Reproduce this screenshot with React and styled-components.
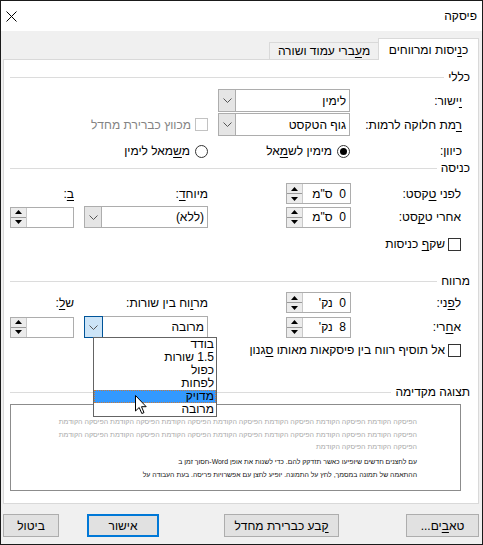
import React from "react";
import styled, { createGlobalStyle, css } from "styled-components";

const Global = createGlobalStyle`
  html, body { margin: 0; padding: 0; background: #fff; }
  body { font-family: "Liberation Sans", "DejaVu Sans", Arial, sans-serif; font-size: 12px; color: #000; }
  * { box-sizing: border-box; }
  u { text-underline-offset: 2px; }
`;

const Window = styled.div`
  width: 483px;
  height: 545px;
  border: 1px solid #1a1a1a;
  display: flex;
  flex-direction: column;
  direction: rtl;
  background: #f0f0f0;
`;

const TitleBar = styled.div`
  height: 30px;
  flex: none;
  background: #fff;
  display: flex;
  align-items: center;
  justify-content: space-between;
  padding: 0 5px 0 4px;
  font-size: 12px;
`;

const CloseBtn = styled.div`
  width: 12px;
  height: 12px;
  display: flex;
  align-items: center;
  justify-content: center;
`;

const Body = styled.div`
  flex: 1;
  display: flex;
  flex-direction: column;
  padding: 7px 3px 7px 2px;
`;

const TabStrip = styled.div`
  height: 22px;
  display: flex;
  align-items: flex-start;
  position: relative;
  z-index: 2;
`;

const Tab = styled.div`
  display: flex;
  align-items: center;
  justify-content: center;
  border: 1px solid #d9d9d9;
  ${(p) =>
    p.$active
      ? css`
          width: 101px;
          height: 22px;
          background: #fff;
          border-bottom: none;
          padding-top: 1px;
        `
      : css`
          width: 110px;
          height: 17px;
          margin-top: 4px;
          margin-right: -1px;
          background: #f0f0f0;
          border-bottom: none;
        `}
`;

const Panel = styled.div`
  height: 445px;
  margin-top: -1px;
  background: #fff;
  border: 1px solid #d9d9d9;
  padding: 10px 8px 0 6px;
  display: flex;
  flex-direction: column;
`;

const SectionHead = styled.div`
  display: flex;
  align-items: center;
  height: 14px;
  margin-top: ${(p) => p.$mt || 0}px;
  white-space: nowrap;
  &::after {
    content: "";
    flex: 1;
    height: 1px;
    background: #dcdcdc;
    margin-right: 4px;
  }
`;

const Row = styled.div`
  display: grid;
  grid-template-columns: ${(p) => p.$cols};
  align-items: center;
  height: ${(p) => p.$h}px;
  margin-top: ${(p) => p.$mt || 0}px;
  padding-right: ${(p) => p.$pr || 0}px;
`;

const FlexRow = styled.div`
  display: flex;
  align-items: center;
  height: ${(p) => p.$h}px;
  margin-top: ${(p) => p.$mt || 0}px;
  padding-right: ${(p) => p.$pr || 0}px;
`;

const Label = styled.div`
  white-space: nowrap;
  color: ${(p) => (p.$disabled ? "#838383" : "#000")};
`;

const ComboWrap = styled.div`
  position: relative;
  height: ${(p) => p.$h}px;
  display: flex;
  direction: ltr;
  border: 1px solid #adadad;
  background: #fff;
`;

const ComboButton = styled.div`
  width: 17px;
  flex: none;
  display: flex;
  align-items: center;
  justify-content: center;
  ${(p) =>
    p.$hot
      ? css`
          background: #cce4f7;
          outline: 1px solid #005499;
        `
      : css`
          background: #e5e5e5;
          border-right: 1px solid #adadad;
        `}
`;

const ComboText = styled.div`
  flex: 1;
  direction: rtl;
  text-align: right;
  padding-right: 3px;
  display: flex;
  align-items: center;
  white-space: nowrap;
`;

const SpinWrap = styled.div`
  height: ${(p) => p.$h}px;
  display: flex;
  direction: ltr;
  border: 1px solid #adadad;
  background: #fff;
`;

const SpinButtons = styled.div`
  width: 16px;
  flex: none;
  display: flex;
  flex-direction: column;
  border-right: 1px solid #c9c9c9;
`;

const SpinHalf = styled.div`
  flex: 1;
  display: flex;
  align-items: center;
  justify-content: center;
  background: #ececec;
  ${(p) => p.$top && css`border-bottom: 1px solid #9a9a9a;`}
`;

const SpinText = styled.div`
  flex: 1;
  direction: rtl;
  text-align: right;
  padding-right: 4px;
  display: flex;
  align-items: center;
  white-space: pre;
`;

const Box = styled.div`
  width: 13px;
  height: 13px;
  flex: none;
  border: 1px solid ${(p) => (p.$disabled ? "#c2c2c2" : "#333")};
  background: #fff;
  margin-left: ${(p) => p.$gap ?? 4}px;
`;

const RadioCircle = styled.div`
  width: 13px;
  height: 13px;
  flex: none;
  border: 1px solid #333;
  border-radius: 50%;
  background: #fff;
  display: flex;
  align-items: center;
  justify-content: center;
  margin-left: 5px;
  &::after {
    content: "";
    width: 7px;
    height: 7px;
    border-radius: 50%;
    background: ${(p) => (p.$checked ? "#000" : "transparent")};
  }
`;

const Option = styled.div`
  display: flex;
  align-items: center;
  white-space: nowrap;
`;

const DropList = styled.div`
  position: absolute;
  left: 8px;
  top: 20px;
  width: 124px;
  height: 80px;
  border: 1px solid #646464;
  background: #fff;
  direction: rtl;
  z-index: 10;
`;

const DropItem = styled.div`
  height: 13px;
  line-height: 13px;
  padding-right: 2px;
  white-space: nowrap;
  ${(p) =>
    p.$sel &&
    css`
      background: #3399ff;
      outline: 1px dotted #c87a3c;
      outline-offset: -1px;
    `}
`;

const Cursor = styled.svg`
  position: absolute;
  left: 41px;
  top: 57px;
  z-index: 11;
`;

const Preview = styled.div`
  margin-top: 5px;
  margin-right: 9px;
  height: 87px;
  border: 1px solid #8c8c8c;
  background: #fff;
  padding: 11px 43px 0 0;
  overflow: hidden;
`;

const PrevLine = styled.div`
  white-space: nowrap;
  text-align: right;
  font-size: ${(p) => (p.$dark ? 6.9 : 7.05)}px;
  height: ${(p) => (p.$dark ? 13.5 : 12.5)}px;
  line-height: ${(p) => (p.$dark ? 13.5 : 12.5)}px;
  color: ${(p) => (p.$dark ? "#111" : "#a9a9a9")};
  direction: ${(p) => (p.$dark ? "ltr" : "rtl")};
  margin-top: ${(p) => p.$mt || 0}px;
`;

const Footer = styled.div`
  margin-top: 10px;
  display: flex;
  height: 23px;
`;

const Button = styled.div`
  width: ${(p) => p.$w}px;
  height: 23px;
  flex: none;
  display: flex;
  align-items: center;
  justify-content: center;
  background: #e1e1e1;
  border: ${(p) => (p.$default ? "2px solid #0078d7" : "1px solid #adadad")};
  margin-right: ${(p) => p.$mr || 0}px;
  white-space: nowrap;
`;

const Spacer = styled.div`
  flex: 1;
`;

const Chevron = () => (
  <svg width="9" height="5" viewBox="0 0 9 5">
    <polyline points="0.5,0.5 4.5,4.5 8.5,0.5" fill="none" stroke="#555" strokeWidth="1" />
  </svg>
);

const Combo = ({ text, h = 22, hot, children }) => (
  <ComboWrap $h={h}>
    <ComboButton $hot={hot}>
      <Chevron />
    </ComboButton>
    <ComboText>{text}</ComboText>
    {children}
  </ComboWrap>
);

const Tri = ({ up }) => (
  <svg width="7" height="4" viewBox="0 0 7 4">
    {up ? <polygon points="0,4 7,4 3.5,0" fill="#000" /> : <polygon points="0,0 7,0 3.5,4" fill="#000" />}
  </svg>
);

const Spin = ({ text = "", h = 21 }) => (
  <SpinWrap $h={h}>
    <SpinButtons>
      <SpinHalf $top>
        <Tri up />
      </SpinHalf>
      <SpinHalf>
        <Tri />
      </SpinHalf>
    </SpinButtons>
    <SpinText>{text}</SpinText>
  </SpinWrap>
);

const GEN = "112px 132px 10px auto";
const IND = "110px 65px 78px 124px 10px 64px";

const pair = "הפיסקה הקודמת";
const rep = (n) => Array(n).fill(pair).join(" ");

export default function App() {
  return (
    <>
      <Global />
      <Window>
        <TitleBar>
          <span>פיסקה</span>
          <CloseBtn>
            <svg width="11" height="11" viewBox="0 0 11 11">
              <path d="M0.5 0.5 L10.5 10.5 M10.5 0.5 L0.5 10.5" stroke="#000" strokeWidth="1" />
            </svg>
          </CloseBtn>
        </TitleBar>
        <Body>
          <TabStrip>
            <Tab $active>
              כ<u>נ</u>יסות ומרווחים
            </Tab>
            <Tab>
              מ<u>ע</u>ברי עמוד ושורה
            </Tab>
          </TabStrip>
          <Panel>
            <SectionHead>כללי</SectionHead>
            <Row $cols={GEN} $h={23} $mt={5} $pr={8}>
              <Label>
                <u>י</u>ישור:
              </Label>
              <Combo text="לימין" h={23} />
            </Row>
            <Row $cols={GEN} $h={23} $mt={1} $pr={8}>
              <Label>
                <u>ר</u>מת חלוקה לרמות:
              </Label>
              <Combo text="גוף הטקסט" h={23} />
              <span />
              <Option>
                <Box $disabled />
                <Label $disabled>מכווץ כברירת מחדל</Label>
              </Option>
            </Row>
            <Row $cols={GEN} $h={16} $mt={7} $pr={8}>
              <Label>כיוון:</Label>
              <Option>
                <RadioCircle $checked />
                <Label>
                  מימין לש<u>מ</u>אל
                </Label>
              </Option>
              <span />
              <Option>
                <RadioCircle />
                <Label>
                  מ<u>ש</u>מאל לימין
                </Label>
              </Option>
            </Row>

            <SectionHead $mt={2}>כניסה</SectionHead>
            <Row $cols={IND} $h={21} $mt={8} $pr={9}>
              <Label>
                לפני <u>ט</u>קסט:
              </Label>
              <Spin text={'0  ס"מ'} />
              <span />
              <Label>
                מיוח<u>ד</u>:
              </Label>
              <span />
              <Label>
                <u>ב</u>:
              </Label>
            </Row>
            <Row $cols={IND} $h={21} $mt={2} $pr={9}>
              <Label>
                אחרי ט<u>ק</u>סט:
              </Label>
              <Spin text={'0  ס"מ'} />
              <span />
              <Combo text="(ללא)" h={22} />
              <span />
              <Spin />
            </Row>
            <FlexRow $h={16} $mt={9} $pr={9}>
              <Box $gap={3} />
              <Label>
                שק<u>ף</u> כניסות
              </Label>
            </FlexRow>

            <SectionHead $mt={22}>מרווח</SectionHead>
            <Row $cols={IND} $h={21} $mt={4} $pr={9}>
              <Label>
                ל<u>פ</u>ני:
              </Label>
              <Spin text={"0  נק'"} />
              <span />
              <Label>
                מר<u>ו</u>וח בין שורות:
              </Label>
              <span />
              <Label>
                ש<u>ל</u>:
              </Label>
            </Row>
            <Row $cols={IND} $h={21} $mt={3} $pr={9}>
              <Label>
                א<u>ח</u>רי:
              </Label>
              <Spin text={"8  נק'"} />
              <span />
              <Combo text="מרובה" h={22} hot>
                <DropList>
                  <DropItem>בודד</DropItem>
                  <DropItem>1.5 שורות</DropItem>
                  <DropItem>כפול</DropItem>
                  <DropItem>לפחות</DropItem>
                  <DropItem $sel>מדויק</DropItem>
                  <DropItem>מרובה</DropItem>
                  <Cursor width="13" height="20" viewBox="0 0 13 20">
                    <path
                      d="M0.5 0.5 L0.5 16 L4.2 12.5 L6.8 18.5 L9 17.6 L6.5 11.7 L11.2 11.7 Z"
                      fill="#fff"
                      stroke="#000"
                      strokeWidth="1"
                      strokeLinejoin="miter"
                    />
                  </Cursor>
                </DropList>
              </Combo>
              <span />
              <Spin />
            </Row>
            <FlexRow $h={16} $mt={5} $pr={9}>
              <Box $gap={3} />
              <Label>
                אל תוסיף רווח בין פיסקאות מאותו <u>ס</u>גנון
              </Label>
            </FlexRow>

            <SectionHead $mt={27}>תצוגה מקדימה</SectionHead>
            <Preview>
              <PrevLine>{rep(7)}</PrevLine>
              <PrevLine>{rep(7)}</PrevLine>
              <PrevLine>{rep(2)}</PrevLine>
              <PrevLine $dark $mt={1}>
                חסוך זמן ב-Word עם לחצנים חדשים שיופיעו כאשר תזדקק להם. כדי לשנות את אופן
              </PrevLine>
              <PrevLine $dark>
                ההתאמה של תמונה במסמך, לחץ על התמונה. יופיע לחצן עם אפשרויות פריסה. בעת העבודה על
              </PrevLine>
            </Preview>
          </Panel>
          <Footer>
            <Button $w={73}>
              טא<u>ב</u>ים...
            </Button>
            <Button $w={115} $mr={67}>
              <u>ק</u>בע כברירת מחדל
            </Button>
            <Spacer />
            <Button $w={72} $default>
              אישור
            </Button>
            <Button $w={56} $mr={28}>
              ביטול
            </Button>
          </Footer>
        </Body>
      </Window>
    </>
  );
}
